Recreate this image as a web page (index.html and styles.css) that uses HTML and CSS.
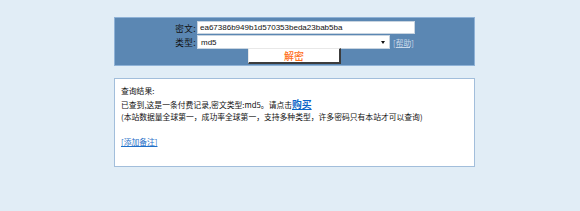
FILE: index.html
```html
<!DOCTYPE html>
<html lang="zh-CN">
<head>
    <meta charset="UTF-8">
    <title>解密</title>
    <link rel="stylesheet" href="styles.css">
</head>
<body>

    <div class="panel">
        <div class="row">
            <label class="lbl" for="q">密文:</label>
            <input type="text" id="q" class="txt" value="ea67386b949b1d570353beda23bab5ba">
        </div>
        <div class="row row2">
            <label class="lbl" for="t">类型:</label>
            <div class="sel">
                <span class="sel-val">md5</span>
                <span class="caret"></span>
            </div>
            <a href="#" class="help">[帮助]</a>
        </div>
        <div class="row row3">
            <button class="btn">解密</button>
        </div>
    </div>

    <div class="result">
        <div>查询结果:</div>
        <div>已查到,这是一条付费记录,密文类型:md5。请点击<a href="#" class="buy">购买</a></div>
        <div>(本站数据量全球第一，成功率全球第一，支持多种类型，许多密码只有本站才可以查询)</div>
        <div class="blank"></div>
        <div><a href="#" class="note">[添加备注]</a></div>
    </div>

</body>
</html>
```

FILE: styles.css
```css
body {
    margin: 0;
    background-color: #e1edf6;
    font-family: "Liberation Sans", "Noto Sans CJK SC", sans-serif;
    font-size: 7.8px;
    color: #111;
}
.panel {
    width: 359px;
    margin: 17px 0 0 114px;
    background-color: #5b87b3;
    border: 1px solid #8fb2d6;
    padding: 3px 0 1px;
}
.row {
    display: flex;
    align-items: center;
}
.lbl {
    width: 81px;
    text-align: right;
    padding-right: 1px;
    font-family: "Noto Sans CJK SC", sans-serif;
    font-size: 8.6px;
    letter-spacing: 0.4px;
    color: #111;
}
.txt {
    width: 218px;
    height: 13px;
    box-sizing: border-box;
    border: 1px solid #c8d4e0;
    background: #fff;
    padding: 0 2px;
    font-family: "Liberation Sans", sans-serif;
    font-size: 8px;
    color: #111;
    margin: 0;
    outline: none;
}
.row2 {
    margin-top: 1px;
}
.sel {
    width: 193px;
    height: 14px;
    box-sizing: border-box;
    background: #fff;
    border: 1px solid #c8d4e0;
    display: flex;
    align-items: center;
    padding: 0 4px 0 3px;
    font-family: "Liberation Sans", sans-serif;
    font-size: 8px;
}
.sel-val {
    flex: 1;
}
.caret {
    width: 0;
    height: 0;
    border-left: 2.5px solid transparent;
    border-right: 2.5px solid transparent;
    border-top: 3px solid #111;
}
.help {
    margin-left: 3px;
    color: #c9d9ea;
    font-family: "Noto Sans CJK SC", sans-serif;
    font-size: 7.8px;
}
.row3 {
    margin-top: -1px;
    padding-left: 133px;
}
.btn {
    width: 93px;
    height: 16px;
    padding: 0;
    background: #fff;
    border-style: solid;
    border-width: 1px 2px 2px 1px;
    border-color: #e8e8e8 #3c3c3c #3c3c3c #e8e8e8;
    color: #ff7020;
    font-family: "Noto Sans CJK SC", sans-serif;
    font-size: 10px;
    font-weight: 500;
    line-height: 12px;
    cursor: pointer;
}
.result {
    width: 353px;
    height: 77px;
    margin: 12px 0 0 114px;
    background: #fff;
    border: 1px solid #a2bedb;
    padding: 6px 0 4px 6px;
    font-family: "Noto Sans CJK SC", sans-serif;
    line-height: 12.6px;
}
.blank {
    height: 12.6px;
}
.buy {
    color: #0a64c8;
    font-weight: bold;
    font-size: 9.8px;
}
.note {
    color: #1f6fc8;
}
```
